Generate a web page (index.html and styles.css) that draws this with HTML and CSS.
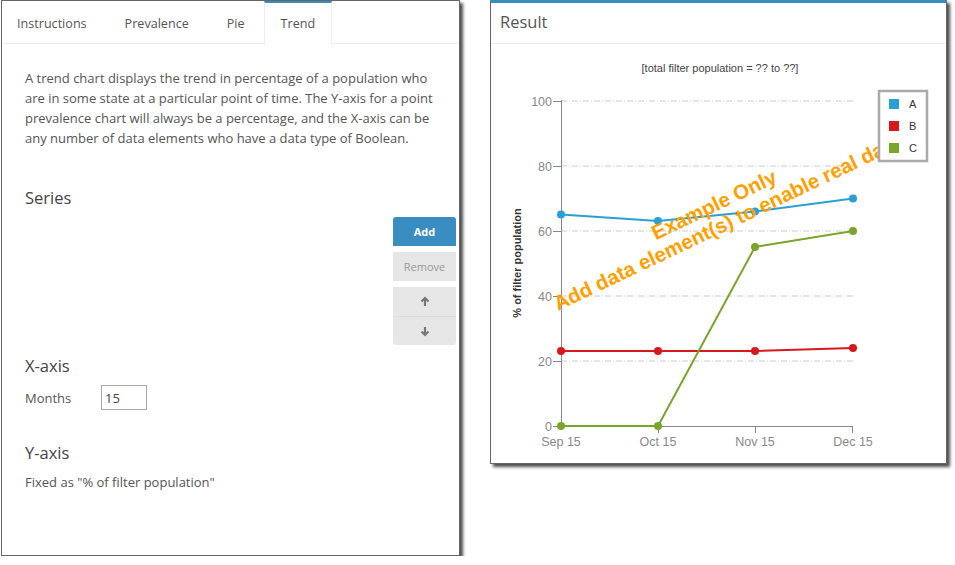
FILE: index.html
```html
<!DOCTYPE html>
<html>
<head>
<meta charset="utf-8">
<link rel="stylesheet" href="styles.css">
</head>
<body>
<div class="page">
  <section class="panel editor">
    <nav class="tabs">
      <div class="tab">Instructions</div>
      <div class="tab">Prevalence</div>
      <div class="tab">Pie</div>
      <div class="tab active">Trend</div>
    </nav>
    <div class="content">
      <p class="intro">A trend chart displays the trend in percentage of a population who are in some state at a particular point of time. The Y-axis for a point prevalence chart will always be a percentage, and the X-axis can be any number of data elements who have a data type of Boolean.</p>
      <h3 class="heading series-heading">Series</h3>
      <div class="series-body">
        <div class="series-list"></div>
        <div class="btn-col">
          <button class="btn btn-add">Add</button>
          <button class="btn btn-remove">Remove</button>
          <div class="btn-group">
            <button class="btn btn-arrow">
              <svg width="10" height="11" viewBox="0 0 10 11"><path d="M5 10V2.5M1.5 5.5L5 2l3.5 3.5" fill="none" stroke="#777" stroke-width="2.2"/></svg>
            </button>
            <button class="btn btn-arrow">
              <svg width="10" height="11" viewBox="0 0 10 11"><path d="M5 1v7.5M1.5 5.5L5 9l3.5-3.5" fill="none" stroke="#777" stroke-width="2.2"/></svg>
            </button>
          </div>
        </div>
      </div>
      <h3 class="heading x-heading">X-axis</h3>
      <div class="field">
        <label class="field-label">Months</label>
        <input class="field-input" type="text" value="15">
      </div>
      <h3 class="heading y-heading">Y-axis</h3>
      <p class="note">Fixed as "% of filter population"</p>
    </div>
  </section>

  <section class="panel result">
    <header class="result-head">Result</header>
    <svg class="chart" width="455" height="419" viewBox="491 44 455 419">
      <text class="subtitle" x="720" y="72" text-anchor="middle">[total filter population = ?? to ??]</text>
      <g class="grid">
        <line x1="561" y1="101" x2="853" y2="101"/>
        <line x1="561" y1="166" x2="853" y2="166"/>
        <line x1="561" y1="231" x2="853" y2="231"/>
        <line x1="561" y1="296" x2="853" y2="296"/>
        <line x1="561" y1="361" x2="853" y2="361"/>
      </g>
      <g class="axis">
        <line x1="561.5" y1="100" x2="561.5" y2="426"/>
        <line x1="561" y1="426.5" x2="853" y2="426.5"/>
        <line x1="553" y1="101.5" x2="561" y2="101.5"/>
        <line x1="553" y1="166.5" x2="561" y2="166.5"/>
        <line x1="553" y1="231.5" x2="561" y2="231.5"/>
        <line x1="553" y1="296.5" x2="561" y2="296.5"/>
        <line x1="553" y1="361.5" x2="561" y2="361.5"/>
        <line x1="553" y1="426.5" x2="561" y2="426.5"/>
        <line x1="658.5" y1="426" x2="658.5" y2="433"/>
        <line x1="755.5" y1="426" x2="755.5" y2="433"/>
        <line x1="852.5" y1="426" x2="852.5" y2="433"/>
      </g>
      <g class="ylabels">
        <text x="552" y="105.5">100</text>
        <text x="552" y="170.5">80</text>
        <text x="552" y="235.5">60</text>
        <text x="552" y="300.5">40</text>
        <text x="552" y="365.5">20</text>
        <text x="552" y="430.5">0</text>
      </g>
      <g class="xlabels">
        <text x="561" y="446">Sep 15</text>
        <text x="658" y="446">Oct 15</text>
        <text x="755" y="446">Nov 15</text>
        <text x="853" y="446">Dec 15</text>
      </g>
      <text class="ytitle" transform="translate(521 263) rotate(-90)" text-anchor="middle">% of filter population</text>

      <g class="series-a">
        <polyline points="561,214.5 658,221 755,211.5 853,198.5"/>
        <circle cx="561" cy="214.5" r="4"/><circle cx="658" cy="221" r="4"/><circle cx="755" cy="211.5" r="4"/><circle cx="853" cy="198.5" r="4"/>
      </g>
      <g class="series-b">
        <polyline points="561,351 658,351 755,351 853,348"/>
        <circle cx="561" cy="351" r="4"/><circle cx="658" cy="351" r="4"/><circle cx="755" cy="351" r="4"/><circle cx="853" cy="348" r="4"/>
      </g>
      <g class="series-c">
        <polyline points="561,426 658,426 755,247 853,231"/>
        <circle cx="561" cy="426" r="4"/><circle cx="658" cy="426" r="4"/><circle cx="755" cy="247" r="4"/><circle cx="853" cy="231" r="4"/>
      </g>

      <g class="watermark">
        <text transform="translate(717 211) rotate(-25.5)" text-anchor="middle">Example Only</text>
        <text transform="translate(558 311) rotate(-25.5)">Add data element(s) to enable real data</text>
      </g>

      <g class="legend">
        <rect class="legend-box" x="879" y="91" width="48" height="70"/>
        <rect x="889" y="99" width="10" height="10" fill="#2a9fd6"/>
        <rect x="889" y="121" width="10" height="10" fill="#d7191c"/>
        <rect x="889" y="143" width="10" height="10" fill="#7aa52a"/>
        <text x="909" y="108">A</text>
        <text x="909" y="130">B</text>
        <text x="909" y="152">C</text>
      </g>
    </svg>
  </section>
</div>
</body>
</html>
```

FILE: styles.css
```css
* { box-sizing: border-box; }

html, body {
  margin: 0;
  padding: 0;
  background: #fff;
}

body {
  font-family: "Open Sans", "Noto Sans", sans-serif;
  color: #555;
}

.page {
  display: flex;
  align-items: flex-start;
  padding-left: 1px;
}

.panel {
  background: #fff;
  border: 1px solid #666;
  box-shadow: 3px 3px 3px rgba(0, 0, 0, 0.7);
}

/* ---------- Left editor panel ---------- */
.editor {
  width: 459px;
  height: 556px;
}

.tabs {
  display: flex;
  height: 43px;
  border-bottom: 1px solid #eee;
}

.tab {
  padding: 0 18px;
  border: 1px solid transparent;
  border-top-width: 2px;
  border-bottom: 0;
  font-size: 12.6px;
  line-height: 42px;
  color: #555;
}

.tab:first-child {
  padding-left: 14px;
}

.tab.active {
  padding: 0 16px;
  border-top: 2px solid #3a8dc1;
  border-left-color: #eee;
  border-right-color: #eee;
  background: #fff;
  height: 44px;
  color: #555;
}

.content {
  padding: 0 3px 0 23px;
}

.intro {
  margin: 24px 0 0;
  width: 412px;
  font-size: 13px;
  line-height: 20px;
  color: #555;
}

.heading {
  margin: 0;
  font-size: 16.5px;
  font-weight: normal;
  line-height: 24px;
  color: #444;
}

.series-heading {
  margin-top: 38px;
}

.series-body {
  display: flex;
  justify-content: space-between;
  margin-top: 7px;
}

.series-list {
  flex: 1;
}

.btn-col {
  display: flex;
  flex-direction: column;
  gap: 6px;
  width: 63px;
}

.btn {
  display: flex;
  align-items: center;
  justify-content: center;
  width: 100%;
  height: 29px;
  margin: 0;
  padding: 0;
  border: 0;
  font-family: "Open Sans", "Noto Sans", sans-serif;
  font-size: 11px;
}

.btn-add {
  background: #3a8dc1;
  color: #fff;
  font-weight: bold;
  border-radius: 3px 3px 0 0;
}

.btn-remove {
  background: #e6e6e6;
  color: #999;
}

.btn-group {
  display: flex;
  flex-direction: column;
  background: #e6e6e6;
  border-radius: 0 0 4px 4px;
}

.btn-arrow {
  background: transparent;
  height: 29px;
}

.btn-arrow + .btn-arrow {
  border-top: 1px solid #ddd;
}

.x-heading {
  margin-top: 9px;
}

.field {
  display: flex;
  align-items: center;
  margin-top: 7px;
}

.field-label {
  width: 76px;
  font-size: 13px;
  color: #555;
}

.field-input {
  width: 46px;
  height: 25px;
  border: 1px solid #aaa;
  padding: 0 3px;
  font-family: "Open Sans", "Noto Sans", sans-serif;
  font-size: 13px;
  color: #444;
  outline: none;
}

.y-heading {
  margin-top: 31px;
}

.note {
  margin: 7px 0 0;
  font-size: 13px;
  line-height: 20px;
  color: #555;
}

/* ---------- Right result panel ---------- */
.result {
  margin-left: 30px;
  width: 457px;
  height: 464px;
  border-top: 3px solid #3a8dc1;
}

.result-head {
  height: 41px;
  padding-left: 9px;
  border-bottom: 1px solid #eee;
  font-size: 16.5px;
  line-height: 38px;
  color: #555;
}

.chart {
  display: block;
  font-family: "Liberation Sans", Arial, sans-serif;
}

.subtitle {
  font-size: 11px;
  fill: #444;
}

.grid line {
  stroke: #ccc;
  stroke-width: 1;
  stroke-dasharray: 6 2 1 2;
}

.axis line {
  stroke: #888;
  stroke-width: 1;
}

.ylabels text {
  font-size: 12.5px;
  fill: #888;
  text-anchor: end;
}

.xlabels text {
  font-size: 12.5px;
  fill: #888;
  text-anchor: middle;
}

.ytitle {
  font-size: 11px;
  font-weight: bold;
  fill: #333;
}

.series-a polyline, .series-b polyline, .series-c polyline {
  fill: none;
  stroke-width: 2;
}

.series-a polyline { stroke: #2a9fd6; }
.series-a circle { fill: #2a9fd6; }
.series-b polyline { stroke: #d7191c; }
.series-b circle { fill: #d7191c; }
.series-c polyline { stroke: #7aa52a; }
.series-c circle { fill: #7aa52a; }

.watermark text {
  font-size: 20.5px;
  font-weight: bold;
  fill: #ffa000;
}

.legend-box {
  fill: #fff;
  stroke: #aaa;
  stroke-width: 2.5;
}

.legend text {
  font-size: 11px;
  fill: #333;
}
```
